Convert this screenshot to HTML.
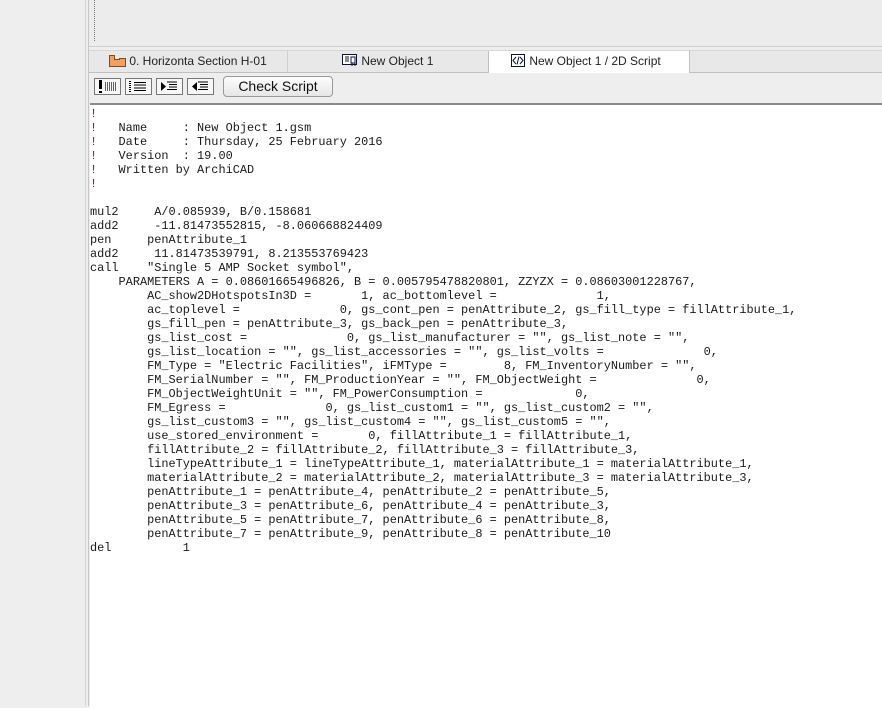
<!DOCTYPE html>
<html><head><meta charset="utf-8"><style>
html,body{margin:0;padding:0;width:882px;height:706px;overflow:hidden;background:#eeeeee;font-family:"Liberation Sans",sans-serif;}
.top{position:absolute;left:89px;top:0;width:793px;height:46px;background:#ececec;border-bottom:1px solid #cfcfcf;}
.grip{position:absolute;left:5px;top:0;width:2px;height:41px;border-left:1px dotted #777;}
.leftline{position:absolute;left:85px;top:0;width:1px;height:706px;background:#d4d4d4;}
.leftline2{position:absolute;left:88px;top:0;width:1px;height:706px;background:#c6c6c6;}
.tabs{position:absolute;left:89px;top:50px;width:793px;height:21px;background:#e8e8e8;border-top:1px solid #d6d6d6;border-bottom:1px solid #c0c0c0;}
.tab{position:absolute;top:0;height:21px;font-size:12px;line-height:21px;color:#222;}
.tab.active{background:#fff;border-left:1px solid #c0c0c0;border-right:1px solid #c0c0c0;height:22px;}
.tb{position:absolute;top:78px;width:25px;height:15px;border:1px solid #777;background:#f7f7f7;}
.btn{position:absolute;left:223px;top:76px;width:108px;height:19px;border:1px solid #999;border-radius:4px;background:linear-gradient(#fdfdfd,#e6e6e6);font-size:14px;text-align:center;line-height:19px;color:#111;}
.ed{position:absolute;left:90px;top:103px;width:792px;height:603px;background:#fff;border-top:2px solid #8a8a8a;}
pre{margin:0;position:absolute;left:0px;top:2px;font-family:"Liberation Mono",monospace;font-size:11.9px;line-height:14px;color:#1a1a1a;}
.r{color:#a0102a;}
</style></head><body>
<div class="top"><div class="grip"></div></div>
<div class="leftline"></div><div class="leftline2"></div>
<div class="tabs">
 <div class="tab" style="left:20px;"><svg width="17" height="12" style="vertical-align:-2px"><path d="M0.5 0.5h5v4h5v-1h6v8h-16z" fill="#f0a060" stroke="#7a4a20"/></svg> 0. Horizonta Section H-01</div>
 <div style="position:absolute;left:198px;top:0;width:1px;height:21px;background:#cfcfcf"></div>
 <div class="tab" style="left:253px;"><svg width="16" height="13" style="vertical-align:-2px"><rect x="0.5" y="0.5" width="14" height="10" fill="#fff" stroke="#113"/><path d="M3 3h4M3 5h4M3 7h4M9 3h4v6h-4z M10 9v3M13 9v3" stroke="#113" fill="none"/></svg> New Object 1</div>
 <div class="tab active" style="left:399px;width:200px;"><span style="position:absolute;left:22px;"><svg width="15" height="13" style="vertical-align:-2px"><rect x="0.5" y="0.5" width="13" height="12" fill="#fff" stroke="#113"/><path d="M5 3l-3 3.5 3 3.5M9 3l3 3.5-3 3.5M8 2.5l-2 8" stroke="#113" fill="none"/></svg> New Object 1 / 2D Script</span></div>
</div>
<div class="tb" style="left:94px"><span style="position:absolute;left:4px;top:1px;width:3px;height:9px;background:#000"></span><span style="position:absolute;left:4px;top:12px;width:3px;height:2px;background:#000"></span><span style="position:absolute;left:10px;top:3px;width:11px;height:9px;background:repeating-linear-gradient(90deg,#000 0 1px,transparent 1px 2px);opacity:.6"></span></div>
<div class="tb" style="left:125px"><span style="position:absolute;left:3px;top:2px;width:2px;height:11px;background:repeating-linear-gradient(#000 0 1px,transparent 1px 2px)"></span><span style="position:absolute;left:8px;top:3px;width:12px;height:9px;background:repeating-linear-gradient(#000 0 1px,transparent 1px 2.7px)"></span></div>
<div class="tb" style="left:156px"><svg width="25" height="15" style="position:absolute;left:0;top:0"><path d="M4 3v9l5-4.5z" fill="#000"/><path d="M10 3h10M12 5.5h8M12 8h8M10 10.5h10" stroke="#000"/></svg></div>
<div class="tb" style="left:187px"><svg width="25" height="15" style="position:absolute;left:0;top:0"><path d="M9 3v9l-5-4.5z" fill="#000"/><path d="M10 3h10M12 5.5h8M12 8h8M10 10.5h10" stroke="#000"/></svg></div>
<div class="btn">Check Script</div>
<div class="ed"><pre><span class="r">!</span>
<span class="r">!</span>   Name     : New Object 1.gsm
<span class="r">!</span>   Date     : Thursday, 25 February 2016
<span class="r">!</span>   Version  : 19.00
<span class="r">!</span>   Written by ArchiCAD
<span class="r">!</span>

mul2     A/0.085939, B/0.158681
add2     -11.81473552815, -8.060668824409
pen     penAttribute_1
add2     11.81473539791, 8.213553769423
call    "Single 5 AMP Socket symbol",
    PARAMETERS A = 0.08601665496826, B = 0.005795478820801, ZZYZX = 0.08603001228767,
        AC_show2DHotspotsIn3D =       1, ac_bottomlevel =              1,
        ac_toplevel =              0, gs_cont_pen = penAttribute_2, gs_fill_type = fillAttribute_1,
        gs_fill_pen = penAttribute_3, gs_back_pen = penAttribute_3,
        gs_list_cost =              0, gs_list_manufacturer = "", gs_list_note = "",
        gs_list_location = "", gs_list_accessories = "", gs_list_volts =              0,
        FM_Type = "Electric Facilities", iFMType =        8, FM_InventoryNumber = "",
        FM_SerialNumber = "", FM_ProductionYear = "", FM_ObjectWeight =              0,
        FM_ObjectWeightUnit = "", FM_PowerConsumption =             0,
        FM_Egress =              0, gs_list_custom1 = "", gs_list_custom2 = "",
        gs_list_custom3 = "", gs_list_custom4 = "", gs_list_custom5 = "",
        use_stored_environment =       0, fillAttribute_1 = fillAttribute_1,
        fillAttribute_2 = fillAttribute_2, fillAttribute_3 = fillAttribute_3,
        lineTypeAttribute_1 = lineTypeAttribute_1, materialAttribute_1 = materialAttribute_1,
        materialAttribute_2 = materialAttribute_2, materialAttribute_3 = materialAttribute_3,
        penAttribute_1 = penAttribute_4, penAttribute_2 = penAttribute_5,
        penAttribute_3 = penAttribute_6, penAttribute_4 = penAttribute_3,
        penAttribute_5 = penAttribute_7, penAttribute_6 = penAttribute_8,
        penAttribute_7 = penAttribute_9, penAttribute_8 = penAttribute_10
del          1
</pre></div>
</body></html>
